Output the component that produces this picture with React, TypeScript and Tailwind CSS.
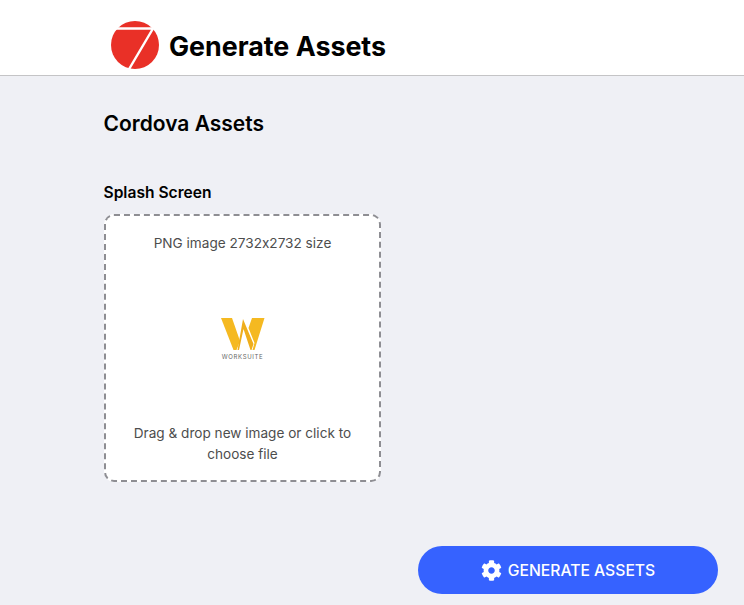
import { FaCog } from "react-icons/fa";

function Logo() {
  return (
    <svg width="50" height="50" viewBox="0 0 50 50" className="mb-[4px] shrink-0">
      <circle cx="25" cy="25" r="24" fill="#e93027" />
      <path d="M4 8.5H43L18.5 50" fill="none" stroke="#fff" strokeWidth="2.4" />
    </svg>
  );
}

function WorksuiteLogo() {
  return (
    <div className="flex flex-col items-center">
      <svg width="44" height="32" viewBox="0 0 44 32">
        <path d="M0 0H11L19 23L15.5 32H12.5Z" fill="#f5b921" />
        <path d="M16.5 32L22 1L32.5 26L30.5 32H29.5L22.5 11L18 32Z" fill="#efae1c" />
        <path d="M31 0H43.5L33.5 32H31.5L33.5 25L27.5 10Z" fill="#f5b921" />
      </svg>
      <span className="mt-[3px] text-[6px] leading-[7px] tracking-[0.65px] text-[#666]">WORKSUITE</span>
    </div>
  );
}

export default function App() {
  return (
    <div className="h-[605px] w-[744px] overflow-hidden bg-[#eff0f5] font-['Inter',sans-serif] [font-feature-settings:'calt'_0]">
      <header className="flex h-[76px] items-center gap-[9px] border-b border-[#c4c4c6] bg-white pl-[110px] pt-[18px]">
        <Logo />
        <h1 className="text-[26.8px] leading-none font-bold text-black">Generate Assets</h1>
      </header>

      <main className="pl-[104px]">
        <h2 className="-ml-[0.5px] pt-[35px] text-[21px] leading-[26px] font-semibold text-black">Cordova Assets</h2>
        <h3 className="-ml-[0.5px] pt-[46px] text-[15.6px] leading-[20px] font-semibold text-black">Splash Screen</h3>

        <div className="mt-[11px] flex h-[268px] w-[277px] flex-col items-center rounded-[10px] border-2 border-dashed border-[#8e8e93] bg-white px-[20px] text-center text-[13.6px] leading-[21px] text-[#4d4d4d]">
          <p className="pt-[17px]">PNG image 2732x2732 size</p>
          <div className="flex flex-1 items-center justify-center pt-[1px]">
            <WorksuiteLogo />
          </div>
          <p className="pb-[15px]">Drag &amp; drop new image or click to choose file</p>
        </div>
      </main>

      <div className="flex justify-end pt-[64px] pr-[26px]">
        <button className="flex h-[48px] w-[300px] items-center justify-center gap-[6px] rounded-full bg-[#3662ff] text-[15.7px] font-medium text-white">
          <FaCog size={21} />
          <span className="pt-[2px]">GENERATE ASSETS</span>
        </button>
      </div>
    </div>
  );
}
